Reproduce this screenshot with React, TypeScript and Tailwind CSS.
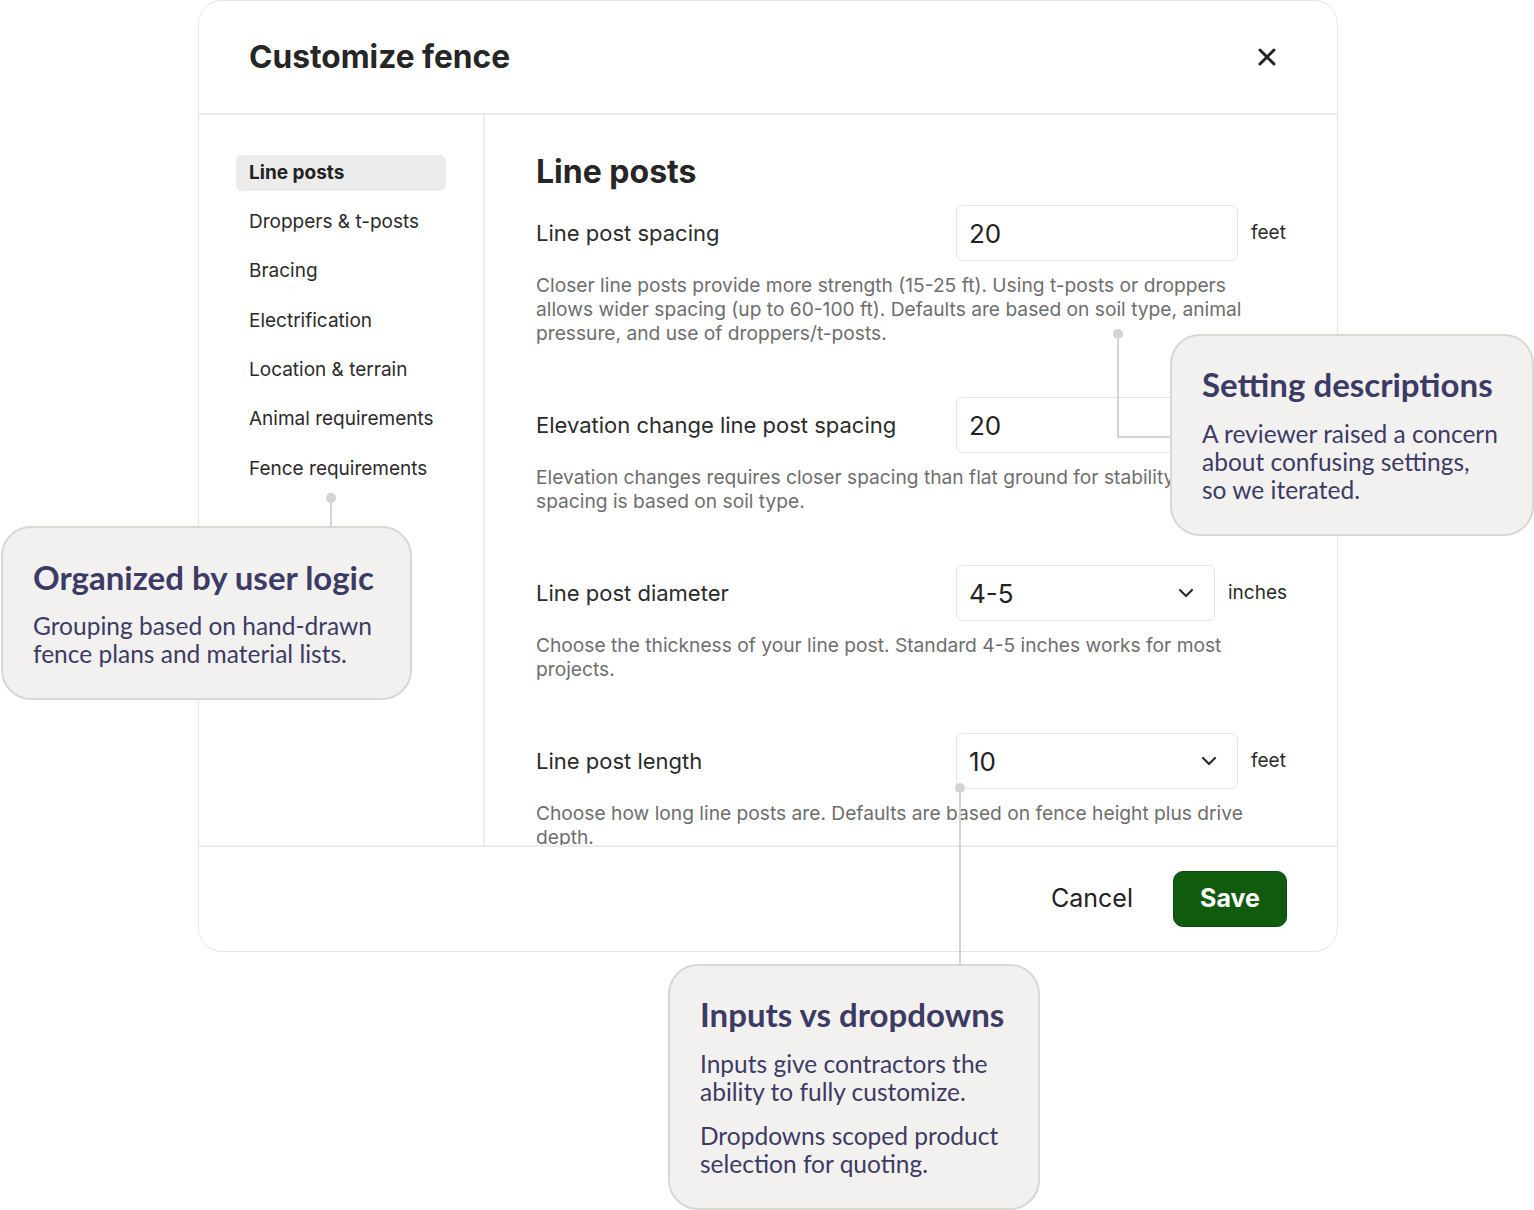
import React from "react";

const ui = { fontFamily: "Inter, 'Liberation Sans', sans-serif" };
const cf = { fontFamily: "Lato, 'Noto Sans', sans-serif" };

function Chevron() {
  return (
    <svg width="16" height="10" viewBox="0 0 16 10" fill="none">
      <path d="M2 2 L8 8 L14 2" stroke="#2b2b2b" strokeWidth="2.2" strokeLinecap="round" strokeLinejoin="round" />
    </svg>
  );
}

type RowProps = {
  label: string;
  value: string;
  unit?: string;
  select?: boolean;
  width: string;
  desc: string;
};

function Row({ label, value, unit, select, width, desc }: RowProps) {
  return (
    <div className="flex flex-col">
      <div className="flex items-center">
        <div className="w-[420px] text-[22px] text-[#2b2b2b]">{label}</div>
        <div
          className={`${width} h-[56px] rounded-[6px] border border-[#e4e4e4] bg-white flex items-center justify-between pl-[12px] pr-[20px]`}
        >
          <span className="text-[26px] text-[#222]">{value}</span>
          {select ? <Chevron /> : null}
        </div>
        {unit ? <div className="ml-[13px] text-[19px] text-[#2b2b2b]">{unit}</div> : null}
      </div>
      <p className="mt-[12px] w-[720px] text-[19.2px] leading-[24px] text-[#6e6e6e]">{desc}</p>
    </div>
  );
}

function Callout({
  className,
  title,
  children,
  gap,
}: {
  className: string;
  title: string;
  children: React.ReactNode;
  gap: string;
}) {
  return (
    <div
      className={`absolute rounded-[30px] border-2 border-[#d9d6d3] bg-[#f2f1f0] text-[#3c3b65] ${className}`}
      style={cf}
    >
      <div className="text-[33px] font-bold leading-[36px] whitespace-nowrap">{title}</div>
      <div className={`${gap} text-[24.5px] leading-[28px] flex flex-col gap-[16px] whitespace-nowrap`}>{children}</div>
    </div>
  );
}

export default function App() {
  const nav = [
    "Line posts",
    "Droppers & t-posts",
    "Bracing",
    "Electrification",
    "Location & terrain",
    "Animal requirements",
    "Fence requirements",
  ];
  return (
    <div className="relative w-[1534px] h-[1210px] bg-white overflow-hidden" style={ui}>
      {/* Modal */}
      <div className="absolute left-[198px] top-0 w-[1140px] h-[952px] flex flex-col rounded-[24px] border border-[#e6e6e6] bg-white">
        <div className="h-[114px] shrink-0 border-b-2 border-[#ebebeb] flex items-center justify-between pl-[50px] pr-[60px]">
          <h1 className="text-[31.7px] font-bold text-[#262626]">Customize fence</h1>
          <svg width="20" height="20" viewBox="0 0 20 20">
            <path d="M3 3 L17 17 M17 3 L3 17" stroke="#222" strokeWidth="3" strokeLinecap="round" />
          </svg>
        </div>
        <div className="flex flex-1 min-h-0 overflow-hidden">
          <div className="w-[286px] shrink-0 border-r-2 border-[#ececec] pl-[37px] pt-[40px]">
            <div className="flex flex-col gap-[13.33px]">
              {nav.map((n, i) => (
                <div
                  key={n}
                  className={`w-[210px] h-[36px] rounded-[6px] px-[13px] flex items-center whitespace-nowrap text-[19px] ${
                    i === 0 ? "bg-[#ececec] font-bold text-[#222]" : "text-[#2b2b2b]"
                  }`}
                >
                  {n}
                </div>
              ))}
            </div>
          </div>
          <div className="flex-1 overflow-hidden pl-[51px] pt-[37px]">
            <h2 className="text-[32px] font-bold text-[#262626] leading-[40px]">Line posts</h2>
            <div className="mt-[13px] flex flex-col gap-[52px]">
              <Row
                label="Line post spacing"
                value="20"
                unit="feet"
                width="w-[282px]"
                desc="Closer line posts provide more strength (15-25 ft). Using t-posts or droppers allows wider spacing (up to 60-100 ft). Defaults are based on soil type, animal pressure, and use of droppers/t-posts."
              />
              <Row
                label="Elevation change line post spacing"
                value="20"
                unit="feet"
                width="w-[282px]"
                desc="Elevation changes requires closer spacing than flat ground for stability. Default spacing is based on soil type."
              />
              <Row
                label="Line post diameter"
                value="4-5"
                unit="inches"
                select
                width="w-[259px]"
                desc="Choose the thickness of your line post. Standard 4-5 inches works for most projects."
              />
              <Row
                label="Line post length"
                value="10"
                unit="feet"
                select
                width="w-[282px]"
                desc="Choose how long line posts are. Defaults are based on fence height plus drive depth."
              />
            </div>
          </div>
        </div>
        <div className="h-[106px] shrink-0 border-t-2 border-[#ececec] flex items-center justify-end pr-[50px] gap-[40px]">
          <span className="text-[25px] text-[#222]">Cancel</span>
          <button className="w-[114px] h-[56px] rounded-[10px] bg-[#115b0e] border border-[#0c4a0a] text-white text-[25px] font-bold">
            Save
          </button>
        </div>
      </div>

      {/* Connectors */}
      <div className="absolute left-[326px] top-[493px] w-[10px] h-[10px] rounded-full bg-[#d6d3d0]" />
      <div className="absolute left-[330px] top-[498px] w-[2px] h-[30px] bg-[#d6d3d0]" />

      <div className="absolute left-[1113px] top-[329px] w-[10px] h-[10px] rounded-full bg-[#d6d3d0]" />
      <div className="absolute left-[1117px] top-[334px] w-[2px] h-[104px] bg-[#d6d3d0]" />
      <div className="absolute left-[1117px] top-[436px] w-[56px] h-[2px] bg-[#d6d3d0]" />

      <div className="absolute left-[955px] top-[783px] w-[10px] h-[10px] rounded-full bg-[#d6d3d0]" />
      <div className="absolute left-[959px] top-[788px] w-[2px] h-[178px] bg-[#d6d3d0]" />

      <Callout
        className="left-[1px] top-[526px] w-[411px] h-[174px] pl-[30px] pt-[31px]"
        gap="mt-[17px]"
        title="Organized by user logic"
      >
        <div>
          Grouping based on hand-drawn
          <br />
          fence plans and material lists.
        </div>
      </Callout>

      <Callout
        className="left-[1170px] top-[334px] w-[364px] h-[202px] pl-[30px] pt-[30px]"
        gap="mt-[18px]"
        title="Setting descriptions"
      >
        <div>
          A reviewer raised a concern
          <br />
          about confusing settings,
          <br />
          so we iterated.
        </div>
      </Callout>

      <Callout
        className="left-[668px] top-[964px] w-[372px] h-[246px] pl-[30px] pt-[30px]"
        gap="mt-[18px]"
        title="Inputs vs dropdowns"
      >
        <div>
          Inputs give contractors the
          <br />
          ability to fully customize.
        </div>
        <div>
          Dropdowns scoped product
          <br />
          selection for quoting.
        </div>
      </Callout>
    </div>
  );
}
